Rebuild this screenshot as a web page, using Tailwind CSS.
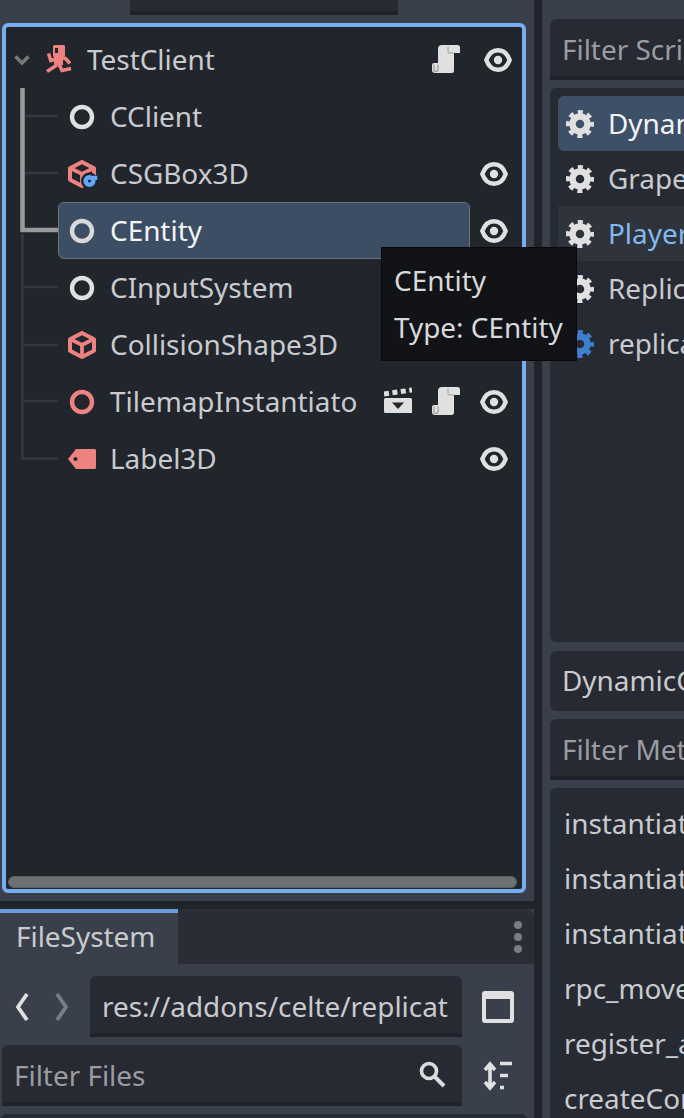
<!DOCTYPE html>
<html lang="en">
<head>
  <meta charset="UTF-8" />
  <title>Scene dock</title>
  <script src="https://cdn.jsdelivr.net/npm/@tailwindcss/browser@4"></script>
</head>
<body class="bg-[#3a404b]">
  <!-- shared icons -->
  <svg width="0" height="0" class="absolute">
    <defs>
      <symbol id="eye" viewBox="0 0 28 24">
        <path d="M14 2.200C8.500 2.200 4.500 6 2.300 12 4.500 18 8.500 21.800 14 21.800S23.500 18 25.700 12C23.500 6 19.500 2.200 14 2.200Z" fill="none" stroke="#e0e0e0" stroke-width="4.400"/>
        <circle cx="14" cy="12" r="4.200" fill="#e0e0e0"/>
      </symbol>
      <symbol id="script" viewBox="0 0 28 28">
        <path d="M10 0H25.500A2.500 2.500 0 0 1 28 2.500V8H22V25.500A2.500 2.500 0 0 1 19.500 28H3A3 3 0 0 1 0 25V20A2 2 0 0 1 2 18H6V4A4 4 0 0 1 10 0Z" fill="#e0e0e0"/>
        <path d="M16 1.500V6.500Q16 8 18 8H22" fill="none" stroke="#b4b4b4" stroke-width="1.500"/>
        <path d="M2 19.500V25Q2 26.500 4 26.500Q6 26.500 6 24V19.500" fill="none" stroke="#a8a8a8" stroke-width="1.500"/>
      </symbol>
      <symbol id="cube" viewBox="0 0 28 28">
        <path d="M14 2 26 8.200V19.800L14 26 2 19.800V8.200Z" fill="none" stroke="#ee8280" stroke-width="4" stroke-linejoin="round"/>
        <path d="M3 8.500 14 14 25 8.500M14 14V25" fill="none" stroke="#ee8280" stroke-width="3.800"/>
      </symbol>
      <symbol id="gear" viewBox="0 0 28 28">
        <circle cx="14" cy="14" r="7.500" fill="none" stroke="currentColor" stroke-width="6.500"/>
        <circle cx="14" cy="14" r="11.600" fill="none" stroke="currentColor" stroke-width="4.800" stroke-dasharray="4.900 4.210" stroke-dashoffset="2.450"/>
      </symbol>
    </defs>
  </svg>

  <div class="relative flex w-[684px] h-[1118px] overflow-hidden text-[27.9px] leading-none text-[#c9cbce] whitespace-nowrap font-['Noto_Sans',sans-serif]">

    <!-- left dock -->
    <div class="w-[534px] shrink-0 flex flex-col rounded-br-lg">
      <div class="ml-[130px] w-[268px] h-[15px] shrink-0 bg-[#272a31] border-b-4 border-[#1f2329]"></div>

      <div class="relative mt-[8px] ml-[2px] w-[524px] h-[870px] shrink-0 flex flex-col justify-between rounded-md border-4 border-[#76aef0] bg-[#21262d]">
        <!-- tree connector lines -->
        <svg class="absolute left-[-6px] top-[-27px]" width="70" height="480" fill="none">
          <path d="M22.500 234V458.500H58M24 287H58M24 345H58M24 401H58" stroke="#343840" stroke-width="2.500"/>
          <path d="M25 116H58M25 173H58" stroke="#343840" stroke-width="2.500"/>
          <path d="M22.500 88V230H58" stroke="#999a9c" stroke-width="4.500"/>
        </svg>

        <div class="relative flex flex-col pt-[4px]">
          <div class="flex items-center h-[57px]">
            <div class="flex items-center w-[468px] h-full pl-[8px]">
              <svg class="shrink-0" width="16" height="12" viewBox="0 0 16 12" fill="none"><path d="M1.500 2.500 8 9 14.500 2.500" stroke="#78797c" stroke-width="3.400"/></svg>
              <svg class="ml-[16px] -mt-[2px] shrink-0" width="28" height="28" viewBox="0 0 28 28" fill="none">
                <path d="M8.500 0H17.500A1.500 1.500 0 0 1 19 1.500V10.500A1.500 1.500 0 0 1 17.500 12H17V20H8V12A1.500 1.500 0 0 1 7 10.500V1.500A1.500 1.500 0 0 1 8.500 0Z" fill="#ee8280"/>
                <rect x="9" y="3" width="3" height="5" fill="#21262d"/>
                <path d="M2.500 8.500 4.800 15.500 10 14M15 13 19.500 13.500 24 18.500" stroke="#ee8280" stroke-width="3.600"/>
                <path d="M1 26.500 11 20M13 19 16 25.500 25 23.500" stroke="#ee8280" stroke-width="3.600"/>
              </svg>
              <span class="ml-[13px]">TestClient</span>
              <svg class="ml-auto mr-[14px] -mt-[2px] shrink-0" width="28" height="28"><use href="#script"/></svg>
            </div>
            <svg class="ml-[10px] shrink-0" width="28" height="24"><use href="#eye"/></svg>
          </div>

          <div class="flex items-center h-[57px] pl-[52px]">
            <div class="flex items-center w-[412px] h-full pl-[10px]">
              <svg class="shrink-0" width="28" height="28" fill="none"><circle cx="14" cy="14" r="10" stroke="#e0e0e0" stroke-width="4.400"/></svg>
              <span class="ml-[14px]">CClient</span>
            </div>
          </div>

          <div class="flex items-center h-[57px] pl-[52px]">
            <div class="flex items-center w-[412px] h-full pl-[10px]">
              <svg class="shrink-0" width="30" height="30" viewBox="0 0 30 30" fill="none">
                <use href="#cube" width="28" height="28" x="0" y="1"/>
                <circle cx="21.500" cy="22" r="8.500" fill="#21262d"/>
                <circle cx="21.500" cy="22" r="3.800" stroke="#62a6f5" stroke-width="4.600"/>
                <path d="M25 18H28V21" stroke="#62a6f5" stroke-width="2.500"/>
              </svg>
              <span class="ml-[12px]">CSGBox3D</span>
            </div>
            <svg class="ml-[10px] shrink-0" width="28" height="24"><use href="#eye"/></svg>
          </div>

          <div class="flex items-center h-[57px] pl-[52px]">
            <div class="flex items-center w-[412px] h-full pl-[9px] rounded-md border border-[#6b7480] bg-[#3c4e63] text-[#f3f4f5]">
              <svg class="shrink-0" width="28" height="28" fill="none"><circle cx="14" cy="14" r="10" stroke="#d8d9da" stroke-width="4.400"/></svg>
              <span class="ml-[14px]">CEntity</span>
            </div>
            <svg class="ml-[10px] shrink-0" width="28" height="24"><use href="#eye"/></svg>
          </div>

          <div class="flex items-center h-[57px] pl-[52px]">
            <div class="flex items-center w-[412px] h-full pl-[10px]">
              <svg class="shrink-0" width="28" height="28" fill="none"><circle cx="14" cy="14" r="10" stroke="#e0e0e0" stroke-width="4.400"/></svg>
              <span class="ml-[14px]">CInputSystem</span>
            </div>
          </div>

          <div class="flex items-center h-[57px] pl-[52px]">
            <div class="flex items-center w-[412px] h-full pl-[10px]">
              <svg class="shrink-0" width="28" height="28"><use href="#cube"/></svg>
              <span class="ml-[14px]">CollisionShape3D</span>
            </div>
          </div>

          <div class="flex items-center h-[57px] pl-[52px]">
            <div class="flex items-center w-[412px] h-full pl-[10px]">
              <svg class="shrink-0" width="28" height="28" fill="none"><circle cx="14" cy="14" r="10" stroke="#ee8280" stroke-width="4.400"/></svg>
              <span class="ml-[14px]">TilemapInstantiato</span>
              <svg class="ml-auto -mt-[2px] shrink-0" width="28" height="28" viewBox="0 0 28 28" fill="none">
                <path d="M0 7 28 3" stroke="#e0e0e0" stroke-width="5" stroke-dasharray="5 3.500"/>
                <path d="M1.500 11H26.500A1.500 1.500 0 0 1 28 12.500V26H1.500A1.500 1.500 0 0 1 0 24.500V12.500A1.500 1.500 0 0 1 1.500 11Z" fill="#e0e0e0"/>
                <path d="M8 15.500H20L14 22Z" fill="#21262d"/>
              </svg>
              <svg class="ml-[20px] mr-[10px] -mt-[2px] shrink-0" width="28" height="28"><use href="#script"/></svg>
            </div>
            <svg class="ml-[10px] shrink-0" width="28" height="24"><use href="#eye"/></svg>
          </div>

          <div class="flex items-center h-[57px] pl-[52px]">
            <div class="flex items-center w-[412px] h-full pl-[10px]">
              <svg class="shrink-0" width="28" height="20" viewBox="0 0 28 20" fill="none">
                <path d="M8 0H26.500A1.500 1.500 0 0 1 28 1.500V18.500A1.500 1.500 0 0 1 26.500 20H8L0 10Z" fill="#ee8280"/>
                <circle cx="7.500" cy="10" r="2" fill="#21262d"/>
              </svg>
              <span class="ml-[14px]">Label3D</span>
            </div>
            <svg class="ml-[10px] shrink-0" width="28" height="24"><use href="#eye"/></svg>
          </div>
        </div>

        <div class="h-[12px] ml-[2px] mr-[5px] mb-[1px] rounded-full bg-[#6e7174] border border-[#5c5f63]"></div>
      </div>

      <!-- filesystem dock -->
      <div class="mt-[8px] h-[8px] shrink-0 bg-[#21252b]"></div>
      <div class="flex h-[55px] shrink-0 rounded-tr-lg bg-[#2a2d35]">
        <div class="w-[178px] h-full border-t-4 border-[#6a9bd8] bg-[#3a404b] pl-[16px] pt-[10px]">FileSystem</div>
        <div class="ml-auto mr-[12px] flex flex-col justify-center gap-[4px]">
          <span class="size-[8px] rounded-full bg-[#7a7d83]"></span>
          <span class="size-[8px] rounded-full bg-[#7a7d83]"></span>
          <span class="size-[8px] rounded-full bg-[#7a7d83]"></span>
        </div>
      </div>

      <div class="mt-[12px] flex items-center h-[61px] shrink-0">
        <svg class="ml-[15px] shrink-0" width="14" height="30" fill="none"><path d="M12 2 3 15 12 28" stroke="#e0e0e0" stroke-width="3.800"/></svg>
        <svg class="ml-[26px] shrink-0" width="14" height="30" fill="none"><path d="M2 2 11 15 2 28" stroke="#7a7d83" stroke-width="3.800"/></svg>
        <div class="ml-[21px] w-[372px] h-full pl-[12px] pt-[4px] flex items-center rounded-t-md bg-[#272a32] border-b-4 border-[#1f2228] overflow-hidden">res://addons/celte/replicat</div>
        <div class="ml-[20px] size-[32px] rounded-[3px] border-4 border-t-8 border-[#e0e0e0]"></div>
      </div>

      <div class="mt-[8px] flex items-center h-[61px] shrink-0">
        <div class="ml-[2px] w-[460px] h-full pl-[12px] pr-[16px] pt-[4px] flex items-center justify-between rounded-t-md bg-[#272a32] border-b-4 border-[#1f2228] text-[#9b9da1]">
          <span>Filter Files</span>
          <svg class="shrink-0 -mt-[4px]" width="28" height="28" fill="none"><circle cx="11" cy="11" r="7.500" stroke="#dcdcdc" stroke-width="3.600"/><path d="M16 16 26 26" stroke="#dcdcdc" stroke-width="4"/></svg>
        </div>
        <svg class="ml-[20px] shrink-0" width="30" height="30" viewBox="0 0 30 30" fill="none">
          <path d="M8 3V27M3 9 8 3 13 9M3 21 8 27 13 21" stroke="#e0e0e0" stroke-width="3.600"/>
          <path d="M18 2.500H30M18 14.500H26M18 26.500H22" stroke="#e0e0e0" stroke-width="3.600"/>
        </svg>
      </div>

      <div class="mt-[8px] ml-[2px] w-[524px] flex-1 rounded-t-md bg-[#262a32]"></div>
    </div>

    <!-- strip between the docks -->
    <div class="w-[8px] shrink-0 bg-[#21252b]"></div>

    <!-- right dock -->
    <div class="pl-[8px] flex-1 min-w-0 flex flex-col">
      <div class="mt-[19px] h-[61px] shrink-0 pl-[12px] pt-[4px] flex items-center rounded-tl-md bg-[#272a32] border-b-4 border-[#1f2228] text-[#9b9da1]">Filter Script</div>

      <div class="mt-[8px] h-[554px] shrink-0 pl-[8px] pt-[8px] rounded-l-md bg-[#262a32]">
        <div class="flex items-center h-[55px] pl-[8px] rounded-l-md bg-[#3d5068] text-[#f3f4f5]">
          <svg class="shrink-0 text-[#e0e0e0]" width="28" height="28"><use href="#gear"/></svg><span class="ml-[14px]">Dynam</span>
        </div>
        <div class="flex items-center h-[55px] pl-[8px]">
          <svg class="shrink-0 text-[#e0e0e0]" width="28" height="28"><use href="#gear"/></svg><span class="ml-[14px]">Grape</span>
        </div>
        <div class="flex items-center h-[55px] pl-[8px] bg-[#2f333b] text-[#84b8f0]">
          <svg class="shrink-0 text-[#e0e0e0]" width="28" height="28"><use href="#gear"/></svg><span class="ml-[14px]">Player</span>
        </div>
        <div class="flex items-center h-[55px] pl-[8px]">
          <svg class="shrink-0 text-[#e0e0e0]" width="28" height="28"><use href="#gear"/></svg><span class="ml-[14px]">Replic</span>
        </div>
        <div class="flex items-center h-[55px] pl-[8px]">
          <svg class="shrink-0 text-[#3d7fcf]" width="28" height="28"><use href="#gear"/></svg><span class="ml-[14px]">replica</span>
        </div>
      </div>

      <div class="mt-[9px] h-[60px] shrink-0 pl-[12px] flex items-center rounded-l-md bg-[#272a32]">DynamicC</div>
      <div class="mt-[8px] h-[61px] shrink-0 pl-[12px] pt-[4px] flex items-center rounded-tl-md bg-[#272a32] border-b-4 border-[#1f2228] text-[#9b9da1]">Filter Meth</div>

      <div class="mt-[8px] flex-1 pl-[14px] pt-[8px] rounded-tl-md bg-[#262a32]">
        <div class="flex items-center h-[55px]">instantiate</div>
        <div class="flex items-center h-[55px]">instantiate</div>
        <div class="flex items-center h-[55px]">instantiate</div>
        <div class="flex items-center h-[55px]">rpc_move</div>
        <div class="flex items-center h-[55px]">register_a</div>
        <div class="flex items-center h-[55px]">createCon</div>
      </div>
    </div>

    <!-- tooltip -->
    <div class="absolute left-[381px] top-[247px] w-[196px] h-[114px] pl-[12px] pt-[19px] bg-[#121317] border border-[#08080a] text-[#d8d9db]">
      <div class="h-[47px]">CEntity</div>
      <div>Type: CEntity</div>
    </div>
  </div>
</body>
</html>
